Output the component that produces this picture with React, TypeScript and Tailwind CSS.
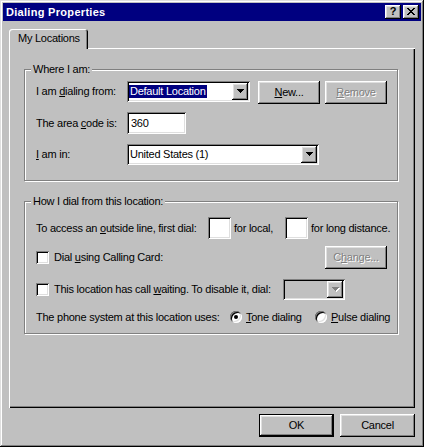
import React from 'react';

const raised =
  'bg-[#c0c0c0] shadow-[inset_-1px_-1px_0_#000,inset_1px_1px_0_#fff,inset_-2px_-2px_0_#808080,inset_2px_2px_0_#dfdfdf]';
const sunken =
  'shadow-[inset_1px_1px_0_#808080,inset_-1px_-1px_0_#fff,inset_2px_2px_0_#000,inset_-2px_-2px_0_#dfdfdf]';
const grayed = 'text-[#808080] [text-shadow:1px_1px_0_#fff]';

function Arrow({ disabled }: { disabled?: boolean }) {
  return (
    <svg width="8" height="5" viewBox="0 0 8 5" shapeRendering="crispEdges">
      {disabled && <path d="M1 1h7v1h-1v1h-1v1h-1v1h-1v-1h-1v-1h-1v-1h-1z" fill="#fff" />}
      <path d="M0 0h7v1h-1v1h-1v1h-1v1h-1v-1h-1v-1h-1v-1h-1z" fill={disabled ? '#808080' : '#000'} />
    </svg>
  );
}

function Combo({ w, disabled, children }: { w: string; disabled?: boolean; children?: React.ReactNode }) {
  return (
    <div className={`flex h-[21px] ${w} p-[2px] ${disabled ? 'bg-[#c0c0c0]' : 'bg-white'} ${sunken}`}>
      <div className="flex flex-1 items-center min-w-0 overflow-hidden whitespace-nowrap">{children}</div>
      <div className={`flex w-[16px] h-[17px] items-center justify-center pl-px ${raised}`}>
        <Arrow disabled={disabled} />
      </div>
    </div>
  );
}

function Btn({
  w,
  className = '',
  def,
  disabled,
  children,
}: {
  w: string;
  className?: string;
  def?: boolean;
  disabled?: boolean;
  children: React.ReactNode;
}) {
  return (
    <div
      className={`flex ${w} h-[23px] items-center justify-center ${raised} ${def ? 'border border-black' : ''} ${
        disabled ? grayed : ''
      } ${className}`}
    >
      {children}
    </div>
  );
}

function Box({ w, h = 'h-[22px]', children }: { w: string; h?: string; children?: React.ReactNode }) {
  return <div className={`flex ${w} ${h} items-center bg-white pl-[4px] ${sunken}`}>{children}</div>;
}

function Check() {
  return <div className={`w-[13px] h-[13px] shrink-0 bg-white ${sunken}`} />;
}

function Radio({ on }: { on?: boolean }) {
  return (
    <div className="flex w-[12px] h-[12px] shrink-0 items-center justify-center rounded-full bg-white shadow-[inset_1px_1px_0_#808080,inset_-1px_-1px_0_#fff,inset_2px_2px_0_#000,inset_-2px_-2px_0_#dfdfdf]">
      {on && <div className="w-[4px] h-[4px] rounded-full bg-black" />}
    </div>
  );
}

function Group({ title, h, children }: { title: string; h: string; children: React.ReactNode }) {
  return (
    <div className={`flex w-[374px] ${h} flex-col border border-[#808080] shadow-[inset_1px_1px_0_#fff,1px_1px_0_#fff]`}>
      <span className="-mt-[7px] ml-[6px] self-start h-[13px] px-[2px] leading-[13px] bg-[#c0c0c0]">{title}</span>
      {children}
    </div>
  );
}

export default function App() {
  return (
    <div className="flex w-[424px] h-[447px] flex-col bg-[#c0c0c0] p-[3px] text-[11px] text-black font-['Liberation_Sans',Arial,sans-serif] shadow-[inset_-1px_-1px_0_#000,inset_1px_1px_0_#dfdfdf,inset_-2px_-2px_0_#808080,inset_2px_2px_0_#fff]">
      {/* title bar */}
      <div className="flex h-[18px] items-center bg-[#000080] pl-[3px] pr-[2px]">
        <span className="flex-1 font-bold tracking-[0.3px] text-white">Dialing Properties</span>
        <div className={`flex w-[16px] h-[14px] items-center justify-center pb-px font-bold leading-none ${raised}`}>?</div>
        <div className={`ml-[2px] flex w-[16px] h-[14px] items-center justify-center pb-px ${raised}`}>
          <svg width="8" height="7" viewBox="0 0 8 7" shapeRendering="crispEdges">
            <path
              d="M0 0h2v1H0zM6 0h2v1H6zM1 1h2v1H1zM5 1h2v1H5zM2 2h4v1H2zM3 3h2v1H3zM2 4h4v1H2zM1 5h2v1H1zM5 5h2v1H5zM0 6h2v1H0zM6 6h2v1H6z"
              fill="#000"
            />
          </svg>
        </div>
      </div>

      <div className="mt-[8px] ml-[6px] flex flex-col tracking-[-0.25px]">
        {/* tab */}
        <div className="relative z-10 flex w-[79px] h-[20px] items-center pl-[9px] pb-[2px] bg-[#c0c0c0] rounded-t-[3px] shadow-[inset_1px_1px_0_#fff,inset_-1px_0_0_#000,inset_-2px_0_0_#808080]">
          My Locations
        </div>

        {/* panel */}
        <div className="-mt-px flex w-[406px] h-[360px] flex-col pl-[15px] pt-[21px] shadow-[inset_1px_1px_0_#fff,inset_-1px_-1px_0_#000,inset_-2px_-2px_0_#808080]">
          <Group title="Where I am:" h="h-[112px]">
            <div className="mt-[5px] flex items-start pl-[11px]">
              <span className="w-[91px] h-[21px] leading-[21px] whitespace-nowrap">
                I am <u>d</u>ialing from:
              </span>
              <Combo w="w-[123px]">
                <span className="h-[13px] px-[1px] leading-[13px] bg-[#000080] text-white">Default Location</span>
              </Combo>
              <Btn w="w-[62px]" className="ml-[8px]">
                <span>
                  <u>N</u>ew...
                </span>
              </Btn>
              <Btn w="w-[62px]" className="ml-[5px]" disabled>
                <span>
                  <u>R</u>emove
                </span>
              </Btn>
            </div>
            <div className="mt-[8px] flex items-center pl-[11px]">
              <span className="w-[91px] whitespace-nowrap">
                The area <u>c</u>ode is:
              </span>
              <Box w="w-[59px]">360</Box>
            </div>
            <div className="mt-[10px] flex items-center pl-[11px]">
              <span className="w-[91px]">
                <u>I</u> am in:
              </span>
              <Combo w="w-[192px]">
                <span className="pl-[1px]">United States (1)</span>
              </Combo>
            </div>
          </Group>

          <div className="mt-[20px]">
            <Group title="How I dial from this location:" h="h-[133px]">
              <div className="mt-[9px] flex items-center pl-[11px] whitespace-nowrap">
                <span className="w-[172px]">
                  To access an <u>o</u>utside line, first dial:
                </span>
                <Box w="w-[23px]" />
                <span className="ml-[3px] w-[51px]">for local,</span>
                <Box w="w-[23px]" />
                <span className="ml-[3px]">for long distance.</span>
              </div>
              <div className="mt-[7px] flex h-[23px] items-center pl-[11px] pr-[10px] whitespace-nowrap">
                <Check />
                <span className="ml-[5px]">
                  Dial <u>u</u>sing Calling Card:
                </span>
                <Btn w="w-[62px]" className="ml-auto" disabled>
                  <span>
                    C<u>h</u>ange...
                  </span>
                </Btn>
              </div>
              <div className="mt-[10px] flex h-[21px] items-center pl-[11px] whitespace-nowrap">
                <Check />
                <span className="ml-[5px] w-[229px]">
                  This location has call <u>w</u>aiting. To disable it, dial:
                </span>
                <Combo w="w-[62px]" disabled />
              </div>
              <div className="mt-[10px] flex h-[14px] items-center pl-[11px] whitespace-nowrap">
                <span className="w-[194px]">The phone system at this location uses:</span>
                <Radio on />
                <span className="ml-[4px] w-[69px]">
                  <u>T</u>one dialing
                </span>
                <Radio />
                <span className="ml-[4px]">
                  <u>P</u>ulse dialing
                </span>
              </div>
            </Group>
          </div>
        </div>
      </div>

      {/* dialog buttons */}
      <div className="mt-[6px] mr-[6px] flex justify-end gap-[6px] tracking-[-0.25px]">
        <Btn w="w-[75px]" def>
          OK
        </Btn>
        <Btn w="w-[75px]">Cancel</Btn>
      </div>
    </div>
  );
}
